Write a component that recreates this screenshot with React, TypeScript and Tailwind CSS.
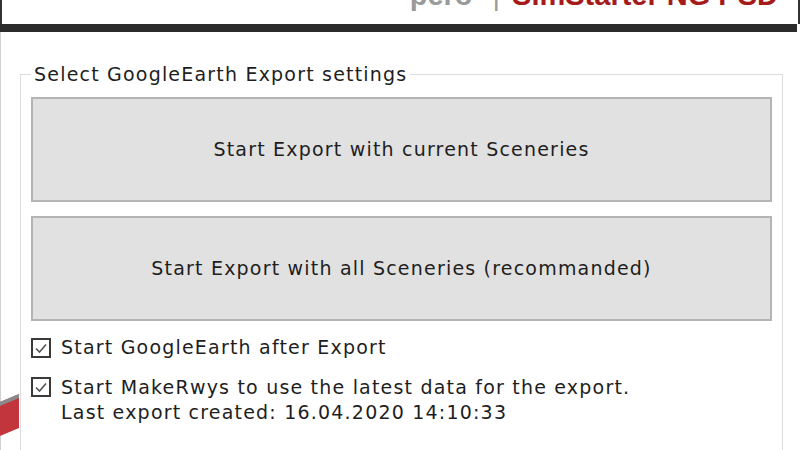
import React from "react";

const font = { fontFamily: '"DejaVu Sans", Verdana, sans-serif' };

const CheckBox: React.FC = () => (
  <span className="flex h-5 w-5 shrink-0 items-center justify-center border-2 border-[#3a3a3a] bg-white">
    <svg viewBox="0 0 16 16" className="h-4 w-4">
      <path d="M3 8.5 L6.5 12 L13 4.5" fill="none" stroke="#555" strokeWidth="1.6" />
    </svg>
  </span>
);

const ExportButton: React.FC<{ label: string }> = ({ label }) => (
  <button
    type="button"
    className="flex h-[105px] w-full items-center justify-center border-2 border-[#b4b4b4] bg-[#e1e1e1] text-[19px] tracking-[1.2px] text-[#1e1e1e]"
  >
    {label}
  </button>
);

export default function App() {
  return (
    <div
      className="relative h-[450px] w-[800px] overflow-hidden bg-white text-[#1e1e1e]"
      style={font}
    >
      {/* window header, title clipped at top */}
      <div className="flex h-6 items-start justify-end overflow-hidden border-x-2 border-[#333] pr-[20px]">
        <div
          className="-mt-[19px] flex items-baseline text-[29px] font-bold leading-none"
          style={{ fontFamily: '"Liberation Sans", Arial, sans-serif' }}
        >
          <span className="text-[#9a9a9a]">pero</span>
          <span className="ml-[20px] mr-[12px] font-normal text-[#9a9a9a]">|</span>
          <span className="text-[#a51b1b]">SimStarter NG PSD</span>
        </div>
      </div>
      <div className="mr-[3px] h-2 bg-[#2b2b2b]" />

      <div className="border-l border-[#d0d0d0] pl-[19px] pr-[17px] pt-[31px]">
        <fieldset className="h-[420px] border border-[#dcdcdc] px-[10px] pt-[12px]">
          <legend className="px-[3px] text-[19px] leading-[22px] tracking-[1.2px]">
            Select GoogleEarth Export settings
          </legend>
          <div className="flex flex-col gap-[14px]">
            <ExportButton label="Start Export with current Sceneries" />
            <ExportButton label="Start Export with all Sceneries (recommanded)" />
          </div>
          <div className="mt-[14px] flex flex-col gap-[16px] text-[19px] leading-[25px] tracking-[1.2px]">
            <label className="flex items-center gap-[10px]">
              <CheckBox />
              <span>Start GoogleEarth after Export</span>
            </label>
            <div className="flex items-start gap-[10px]">
              <span className="mt-[1px]">
                <CheckBox />
              </span>
              <div>
                <div className="-mt-[1px]">Start MakeRwys to use the latest data for the export.</div>
                <div>Last export created: 16.04.2020 14:10:33</div>
              </div>
            </div>
          </div>
        </fieldset>
      </div>

      {/* background fragment peeking at the left edge */}
      <svg className="absolute left-0 top-[392px] h-[46px] w-[19px]" viewBox="0 0 19 46">
        <polygon points="0,10 19,2 19,36 0,44" fill="#c2353c" />
        <polygon points="0,10 19,2 19,6 0,14" fill="#8a8a8a" />
      </svg>
    </div>
  );
}
